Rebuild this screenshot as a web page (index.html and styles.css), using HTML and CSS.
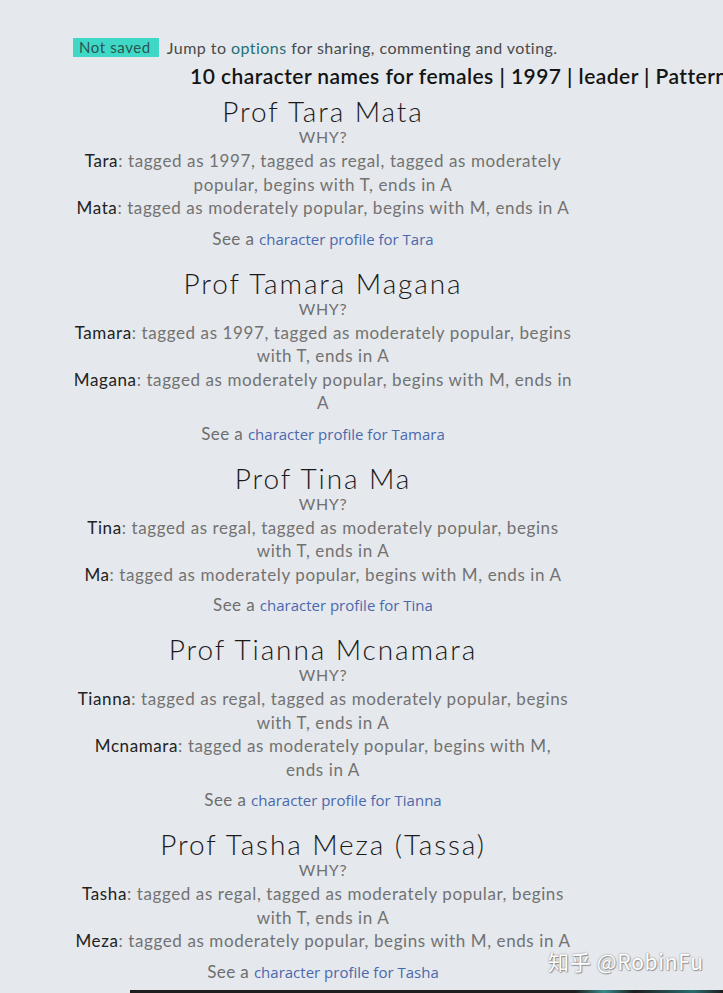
FILE: index.html
```html
<!DOCTYPE html>
<html>
<head>
<meta charset="utf-8">
<link rel="stylesheet" href="styles.css">
</head>
<body>
<div class="page">
  <div class="notice">
    <span class="badge">Not saved</span>
    <span class="jump">Jump to <a class="opt">options</a> for sharing, commenting and voting.</span>
  </div>
  <h1 class="title">10 character names for females | 1997 | leader | Pattern</h1>
  <div class="list">
    <section class="entry">
      <h2 class="name">Prof Tara Mata</h2>
      <div class="why">WHY?</div>
      <p class="reason"><b>Tara</b>: tagged as 1997, tagged as regal, tagged as moderately popular, begins with T, ends in A</p>
      <p class="reason"><b>Mata</b>: tagged as moderately popular, begins with M, ends in A</p>
      <p class="see">See a <a class="prof">character profile for Tara</a></p>
    </section>
    <section class="entry">
      <h2 class="name">Prof Tamara Magana</h2>
      <div class="why">WHY?</div>
      <p class="reason"><b>Tamara</b>: tagged as 1997, tagged as moderately popular, begins with T, ends in A</p>
      <p class="reason"><b>Magana</b>: tagged as moderately popular, begins with M, ends in A</p>
      <p class="see">See a <a class="prof">character profile for Tamara</a></p>
    </section>
    <section class="entry">
      <h2 class="name">Prof Tina Ma</h2>
      <div class="why">WHY?</div>
      <p class="reason"><b>Tina</b>: tagged as regal, tagged as moderately popular, begins with T, ends in A</p>
      <p class="reason"><b>Ma</b>: tagged as moderately popular, begins with M, ends in A</p>
      <p class="see">See a <a class="prof">character profile for Tina</a></p>
    </section>
    <section class="entry">
      <h2 class="name">Prof Tianna Mcnamara</h2>
      <div class="why">WHY?</div>
      <p class="reason"><b>Tianna</b>: tagged as regal, tagged as moderately popular, begins with T, ends in A</p>
      <p class="reason"><b>Mcnamara</b>: tagged as moderately popular, begins with M, ends&nbsp;in&nbsp;A</p>
      <p class="see">See a <a class="prof">character profile for Tianna</a></p>
    </section>
    <section class="entry">
      <h2 class="name">Prof Tasha Meza (Tassa)</h2>
      <div class="why">WHY?</div>
      <p class="reason"><b>Tasha</b>: tagged as regal, tagged as moderately popular, begins with T, ends in A</p>
      <p class="reason"><b>Meza</b>: tagged as moderately popular, begins with M, ends in A</p>
      <p class="see">See a <a class="prof">character profile for Tasha</a></p>
    </section>
  </div>
  <div class="bottombar"></div>
</div>
<div class="watermark">知乎 @RobinFu</div>
</body>
</html>
```

FILE: styles.css
```css
html, body {
  margin: 0;
  padding: 0;
  background: #e5e8ec;
  overflow: hidden;
}
body {
  width: 723px;
  height: 993px;
  font-family: "Lato", "Noto Sans", sans-serif;
  color: #6b6b6b;
}
.page {
  padding-top: 38px;
  position: relative;
  height: 955px;
}
.notice {
  display: flex;
  align-items: center;
  margin-left: 73px;
  height: 19px;
  font-size: 16px;
  white-space: nowrap;
}
.badge {
  background: #3fd8c6;
  color: #2b5550;
  padding: 0 8px 0 6px;
  height: 19px;
  line-height: 19px;
  margin-right: 8px;
  font-size: 15px;
  letter-spacing: 0.6px;
}
.jump {
  color: #4a4a4a;
  letter-spacing: 0.45px;
}
.opt {
  color: #1e7078;
}
.title {
  margin: 7px 0 0 190px;
  font-size: 21px;
  font-weight: 600;
  color: #141414;
  white-space: nowrap;
  line-height: 24px;
  letter-spacing: 0.45px;
}
.list {
  width: 500px;
  margin-left: 73px;
  margin-top: 8px;
  text-align: center;
}
.entry {
  margin-bottom: 17px;
}
.name {
  margin: 0;
  font-size: 28px;
  font-weight: 300;
  letter-spacing: 1.9px;
  color: #1a1a1a;
  line-height: 30px;
}
.why {
  font-size: 16px;
  line-height: 20px;
  margin-top: 1px;
  color: #707070;
  letter-spacing: 0.6px;
}
.reason {
  margin: 0;
  font-size: 17px;
  line-height: 23.5px;
  color: #727272;
  letter-spacing: 0.6px;
}
.reason:first-of-type {
  margin-top: 2px;
}
.reason b {
  font-weight: 400;
  color: #222;
}
.see {
  margin: 7px 0 0;
  font-size: 17px;
  line-height: 24px;
  color: #6e6e6e;
  letter-spacing: 0.4px;
}
.prof {
  font-family: "Open Sans", "Noto Sans", sans-serif;
  font-size: 15px;
  letter-spacing: 0;
  color: #4a68ad;
}
.bottombar {
  position: absolute;
  left: 130px;
  right: 0;
  bottom: 0;
  height: 3px;
  background: linear-gradient(90deg, #1e1e1e 0%, #1e1e1e 75%, #3a8c8c 80%, #1e1e1e 85%, #2b6d70 95%, #1e1e1e 100%);
}
.watermark {
  position: absolute;
  left: 548px;
  top: 946px;
  font-family: "Noto Sans CJK SC", "Noto Sans", sans-serif;
  font-size: 21px;
  letter-spacing: 0.7px;
  color: #ffffff;
  text-shadow: 0 0 2px rgba(0,0,0,0.45), 1px 1px 1px rgba(0,0,0,0.3);
  white-space: nowrap;
}
```
